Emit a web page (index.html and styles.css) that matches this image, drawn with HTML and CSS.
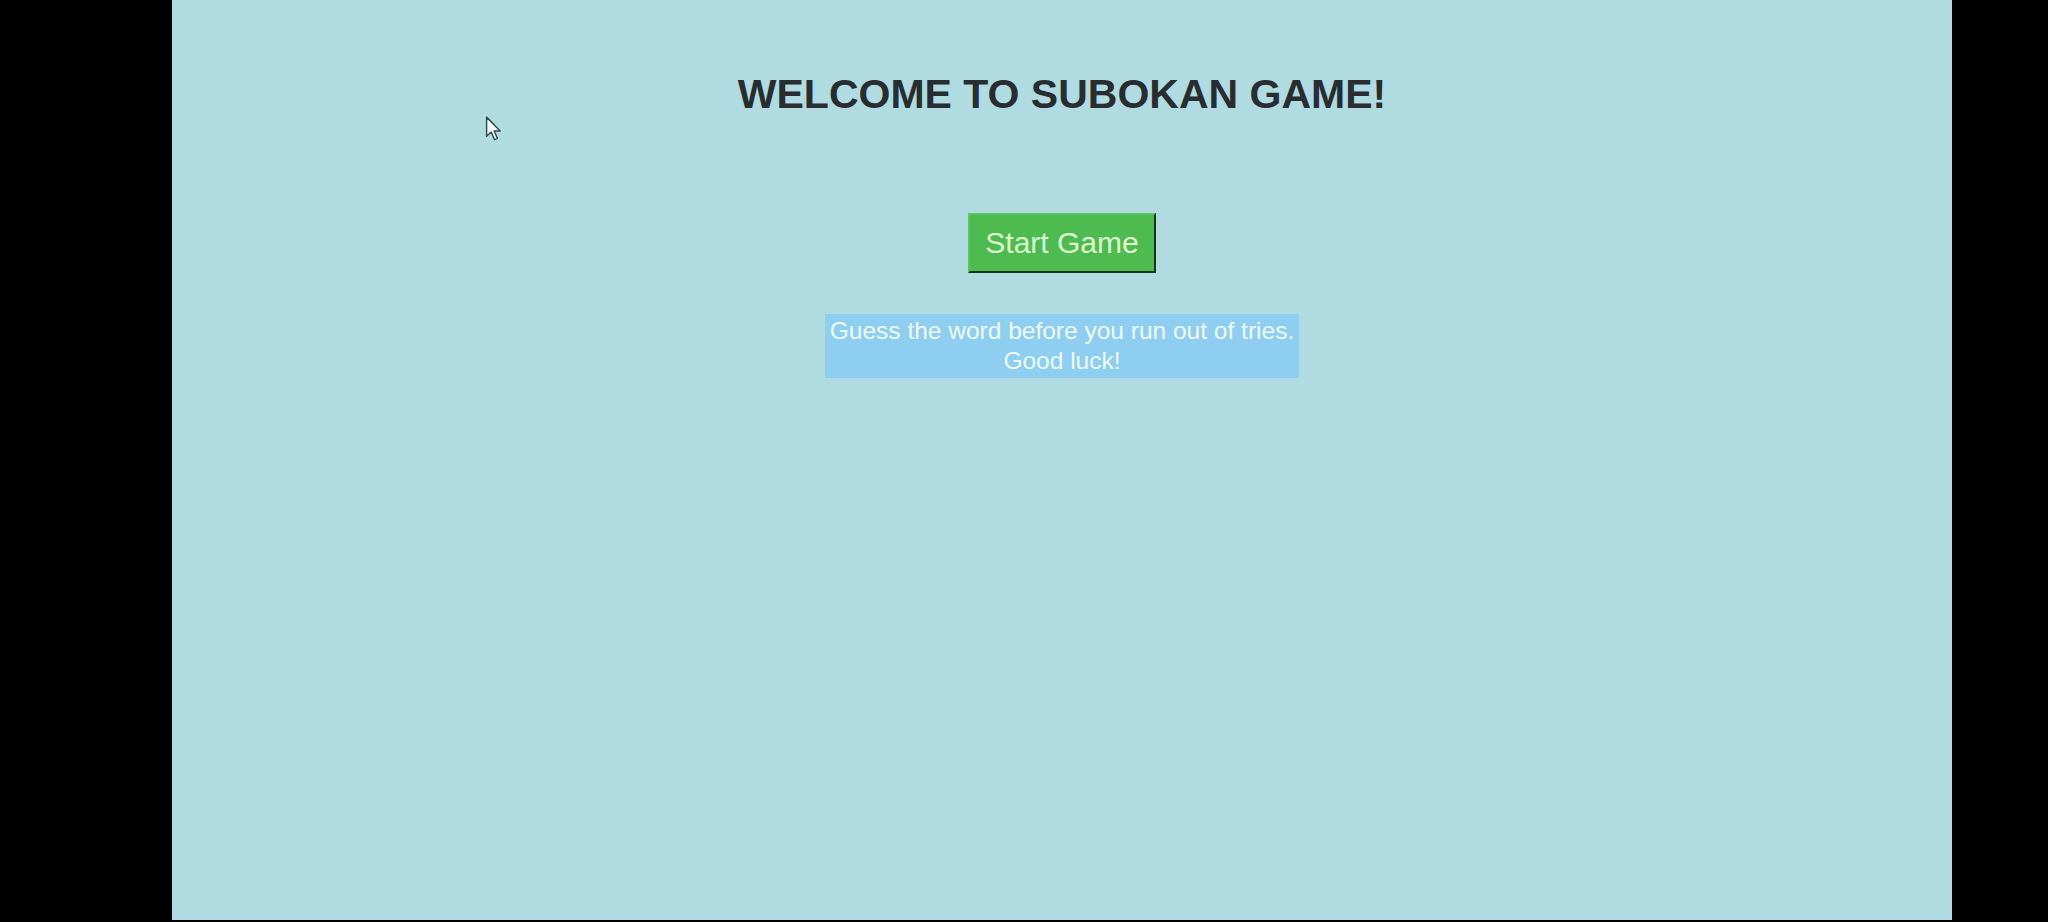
FILE: index.html
```html
<!DOCTYPE html>
<html lang="en">
<head>
<meta charset="utf-8">
<title>Subokan Game</title>
<link rel="stylesheet" href="styles.css">
</head>
<body>
<div class="screen">
  <main class="welcome">
    <h1 class="title">WELCOME TO SUBOKAN GAME!</h1>
    <button class="start-btn" type="button">Start Game</button>
    <p class="hint">Guess the word before you run out of tries.<br>Good luck!</p>
  </main>
  <svg class="cursor" width="19" height="27" viewBox="0 0 16 24" aria-hidden="true">
    <path d="M1 1 L1 18 L5 14.2 L8 21 L10.6 19.9 L7.7 13.3 L13 13.3 Z" fill="#ffffff" stroke="#2f4a52" stroke-width="1.3" stroke-linejoin="round"/>
  </svg>
</div>
</body>
</html>
```

FILE: styles.css
```css
html, body {
  margin: 0;
  padding: 0;
  background: #000000;
  height: 100%;
}

body {
  font-family: "Liberation Sans", Arial, sans-serif;
}

.screen {
  position: relative;
  margin-left: 172px;
  width: 1780px;
  height: 920px;
  background: #b0dbe1;
  overflow: hidden;
}

.welcome {
  display: flex;
  flex-direction: column;
  align-items: center;
  padding-top: 70px;
}

.title {
  margin: 0;
  font-size: 41px;
  line-height: 48px;
  font-weight: bold;
  color: #272d31;
}

.start-btn {
  margin-top: 95px;
  padding: 11px 15px;
  font-family: "Liberation Sans", Arial, sans-serif;
  font-size: 30px;
  line-height: 34px;
  color: #dcfcd0;
  background: #4dbb4f;
  border: 2px solid;
  border-color: #58c85a #16361a #16361a #58c85a;
  cursor: pointer;
}

.hint {
  margin: 41px 0 0;
  padding: 2px 5px;
  font-size: 24.5px;
  line-height: 30px;
  text-align: center;
  color: #eef9fd;
  background: #8ecff1;
}

.cursor {
  position: absolute;
  left: 313px;
  top: 116px;
}
```
